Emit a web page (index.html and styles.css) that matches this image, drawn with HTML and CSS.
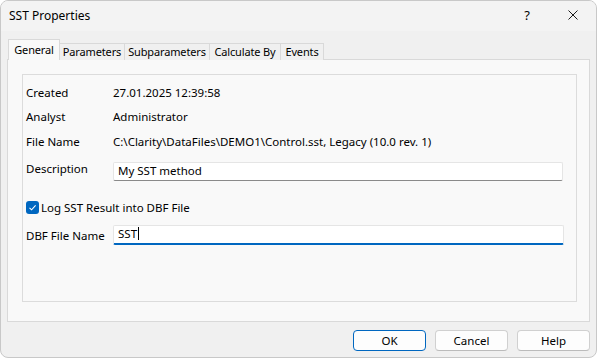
FILE: index.html
```html
<!DOCTYPE html>
<html lang="en">
<head>
    <title>SST Properties</title>
    <link rel="stylesheet" href="styles.css">
</head>
<body>
    <div class="window">
        <div class="titlebar">
            <span class="title">SST Properties</span>
            <span class="help-btn">?</span>
            <span class="close-btn">
                <svg width="10" height="10" viewBox="0 0 10 10"><path d="M0.5 0.5 L9.5 9.5 M9.5 0.5 L0.5 9.5" stroke="#1a1a1a" stroke-width="1"/></svg>
            </span>
        </div>
        <div class="content">
            <div class="tabs">
                <div class="tab active t-general">General</div>
                <div class="tab t-params">Parameters</div>
                <div class="tab t-sub">Subparameters</div>
                <div class="tab t-calc">Calculate By</div>
                <div class="tab t-events">Events</div>
            </div>
            <div class="panel">
                <div class="group">
                    <div class="row r-created"><span class="label">Created</span><span class="value">27.01.2025 12:39:58</span></div>
                    <div class="row r-analyst"><span class="label">Analyst</span><span class="value">Administrator</span></div>
                    <div class="row r-file"><span class="label">File Name</span><span class="value">C:\Clarity\DataFiles\DEMO1\Control.sst, Legacy (10.0 rev. 1)</span></div>
                    <div class="row r-desc"><span class="label top">Description</span><div class="input">My SST method</div></div>
                    <div class="row r-check">
                        <span class="checkbox">
                            <svg width="13" height="13" viewBox="0 0 13 13"><path d="M3.5 6.8 L5.6 8.8 L9.6 4.4" fill="none" stroke="#fff" stroke-width="1.1"/></svg>
                        </span>
                        <span class="check-label">Log SST Result into DBF File</span>
                    </div>
                    <div class="row r-dbf"><span class="label">DBF File Name</span><div class="input focused">SST<span class="caret"></span></div></div>
                </div>
            </div>
            <div class="buttons">
                <div class="btn default">OK</div>
                <div class="btn">Cancel</div>
                <div class="btn">Help</div>
            </div>
        </div>
    </div>
</body>
</html>
```

FILE: styles.css
```css
* {
    margin: 0;
    padding: 0;
    box-sizing: border-box;
}
body {
    background: #ffffff;
    font-family: "Noto Sans", sans-serif;
    font-size: 11.5px;
    color: #000000;
}
.window {
    width: 597px;
    height: 358px;
    background: #f0f0f0;
    border: 1px solid #c8c8c8;
    border-radius: 8px;
    overflow: hidden;
}
.titlebar {
    height: 30px;
    display: flex;
    align-items: center;
    background: #f3f3f3;
    padding-left: 8px;
}
.title {
    flex: 1;
    font-size: 12px;
    margin-top: -2px;
}
.help-btn {
    width: 46px;
    text-align: center;
    font-size: 13px;
    margin-top: -2px;
}
.close-btn {
    width: 46px;
    display: flex;
    justify-content: center;
    margin-top: -2px;
}
.content {
    padding: 7px 6px 0 6px;
}
.tabs {
    display: flex;
    align-items: flex-end;
    height: 21px;
    padding-left: 1px;
}
.tab {
    height: 17px;
    line-height: 16px;
    font-size: 11px;
    letter-spacing: -0.15px;
    text-align: center;
    white-space: nowrap;
    border: 1px solid #d9d9d9;
    border-bottom: none;
    border-left: none;
    background: #f0f0f0;
    margin-bottom: -1px;
}
.tab.active {
    height: 21px;
    line-height: 19px;
    background: #f9f9f9;
    border-left: 1px solid #d9d9d9;
    position: relative;
    z-index: 1;
}
.t-general { width: 52px; }
.t-params { width: 65px; }
.t-sub { width: 85px; }
.t-calc { width: 71px; }
.t-events { width: 43px; }
.panel {
    height: 263px;
    background: #f9f9f9;
    border: 1px solid #d9d9d9;
    padding: 14px 12px 19px 14px;
}
.group {
    height: 100%;
    border: 1px solid #dcdcdc;
    padding: 0 13px 0 3px;
}
.row {
    display: flex;
    align-items: center;
}
.label {
    width: 87px;
    flex-shrink: 0;
}
.label.top {
    align-self: flex-start;
    line-height: 13px;
}
.r-created { margin-top: 6px; height: 22px; }
.r-analyst { margin-top: 2px; height: 22px; }
.r-file { margin-top: 3px; height: 22px; }
.r-desc { margin-top: 10px; height: 19px; align-items: flex-start; }
.r-check { margin-top: 20px; height: 13px; }
.r-dbf { margin-top: 11px; height: 20px; }
.input {
    flex: 1;
    height: 19px;
    background: #ffffff;
    border: 1px solid #e5e5e5;
    border-bottom-color: #8a8a8a;
    border-radius: 2px;
    padding-left: 4px;
    line-height: 16px;
}
.input.focused {
    height: 20px;
    margin-right: -1px;
    border-bottom: 2px solid #0067c0;
    padding-left: 4px;
}
.caret {
    display: inline-block;
    width: 1px;
    height: 13px;
    background: #000;
    vertical-align: -2px;
    margin-left: 1px;
}
.checkbox {
    width: 13px;
    height: 13px;
    background: #0067c0;
    border-radius: 3px;
    display: flex;
}
.check-label {
    margin-left: 2px;
}
.buttons {
    display: flex;
    justify-content: flex-end;
    gap: 9px;
    margin-top: 8px;
}
.btn {
    width: 73px;
    height: 21px;
    line-height: 19px;
    text-align: center;
    background: #fdfdfd;
    border: 1px solid #d0d0d0;
    border-bottom-color: #bbbbbb;
    border-radius: 4px;
}
.btn.default {
    border: 1px solid #0067c0;
}
```
